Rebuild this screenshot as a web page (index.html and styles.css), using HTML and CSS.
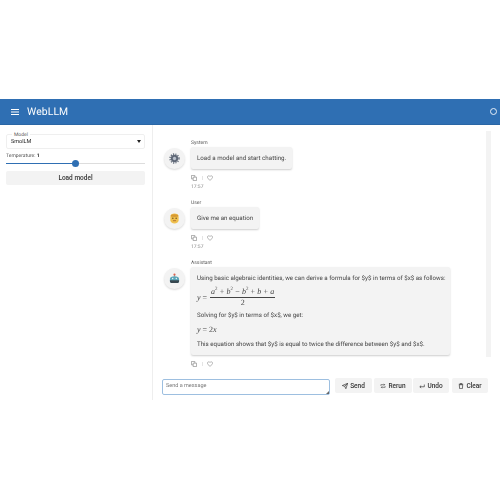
FILE: index.html

```html
<!DOCTYPE html>
<html lang="en">
<head>
  <meta charset="UTF-8" />
  <title>WebLLM</title>
  <link rel="stylesheet" href="styles.css">
</head>
<body>
  <div class="app">
    <header class="topbar">
      <svg class="menu-icon" width="10" height="10" viewBox="0 0 10 10"><path d="M1 2h8v1H1zM1 4.500h8v1H1zM1 7h8v1H1z" fill="#fff"/></svg>
      <h1>WebLLM</h1>
      <span class="spinner"></span>
    </header>
    <div class="main">
      <aside class="sidebar">
        <div class="select-box">
          <span class="select-label">Model</span>
          <span>SmolLM</span>
          <span class="select-arrow"></span>
        </div>
        <div class="temp-label">Temperature: <b>1</b></div>
        <div class="slider"><span class="slider-fill"></span><span class="slider-thumb"></span></div>
        <button class="load-btn">Load model</button>
      </aside>
      <section class="chat">
        <div class="messages">
          <div class="msg">
            <div class="avatar">
              <svg width="11" height="11" viewBox="0 0 12 12"><circle cx="6" cy="6" r="4" fill="#5f6877"/><circle cx="6" cy="6" r="4.900" fill="none" stroke="#5f6877" stroke-width="1.500" stroke-dasharray="1.300 1.300"/><circle cx="6" cy="6" r="1.800" fill="#b9c0cb"/></svg>
            </div>
            <div class="msg-body">
              <div class="msg-role">System</div>
              <div class="bubble">Load a model and start chatting.</div>
              <div class="msg-tools">
                <svg width="6" height="6" viewBox="0 0 7 7"><path d="M2.500 2.500h4v4h-4zM4.500 2.500V.5h-4v4h2" fill="none" stroke="#8a8a8a" stroke-width=".8"/></svg>
                <span class="tool-sep"></span>
                <svg width="6" height="6" viewBox="0 0 7 7"><path d="M3.500 6.200C1.500 4.700.5 3.700.5 2.500c0-1.700 2.200-2.100 3-.6.800-1.500 3-1.100 3 .6 0 1.200-1 2.200-3 3.700z" fill="none" stroke="#8a8a8a" stroke-width=".7"/></svg>
              </div>
              <div class="msg-time">17:57</div>
            </div>
          </div>
          <div class="msg">
            <div class="avatar">
              <svg width="11" height="11" viewBox="0 0 12 12"><path d="M1.500 4.500C1.500 1.500 3.500.6 6 .6s4.500.9 4.500 3.900v3.500c0 1.900-2 3.400-4.500 3.400S1.500 9.900 1.500 8z" fill="#f0c14e"/><path d="M2 3.800C4 4.400 8 4.400 10 3.800V2.200C8 1 4 1 2 2.200z" fill="#d89a32"/><circle cx="4.200" cy="5.800" r=".8" fill="#6a4a20"/><circle cx="7.800" cy="5.800" r=".8" fill="#6a4a20"/><path d="M4.300 8.400h3.400" stroke="#a8662a" stroke-width=".9"/></svg>
            </div>
            <div class="msg-body">
              <div class="msg-role">User</div>
              <div class="bubble">Give me an equation</div>
              <div class="msg-tools">
                <svg width="6" height="6" viewBox="0 0 7 7"><path d="M2.500 2.500h4v4h-4zM4.500 2.500V.5h-4v4h2" fill="none" stroke="#8a8a8a" stroke-width=".8"/></svg>
                <span class="tool-sep"></span>
                <svg width="6" height="6" viewBox="0 0 7 7"><path d="M3.500 6.200C1.500 4.700.5 3.700.5 2.500c0-1.700 2.200-2.100 3-.6.800-1.500 3-1.100 3 .6 0 1.200-1 2.200-3 3.700z" fill="none" stroke="#8a8a8a" stroke-width=".7"/></svg>
              </div>
              <div class="msg-time">17:57</div>
            </div>
          </div>
          <div class="msg">
            <div class="avatar">
              <svg width="11" height="11" viewBox="0 0 12 12"><path d="M1 6.500C1 4.500 3 3.500 6 3.500s5 1 5 3v2.500c0 1-1 2-2 2H3c-1 0-2-1-2-2z" fill="#5aa5b8"/><path d="M1 8h10v1c0 1-1 2-2 2H3c-1 0-2-1-2-2z" fill="#37474f"/><circle cx="6" cy="1.800" r="1.200" fill="#e0604c"/><path d="M5.500 2.500h1v1.200h-1z" fill="#888"/><circle cx="4" cy="6" r=".8" fill="#e8f2f5"/><circle cx="8" cy="6" r=".8" fill="#e8f2f5"/></svg>
            </div>
            <div class="msg-body">
              <div class="msg-role">Assistant</div>
              <div class="bubble bubble-wide">
                <p>Using basic algebraic identities, we can derive a formula for $y$ in terms of $x$ as follows:</p>
                <div class="math">
                  <span class="math-lhs"><i>y</i> =</span>
                  <span class="frac">
                    <span class="frac-top"><i>a</i><sup>2</sup> + <i>b</i><sup>2</sup> − <i>b</i><sup>2</sup> + <i>b</i> + <i>a</i></span>
                    <span>2</span>
                  </span>
                </div>
                <p>Solving for $y$ in terms of $x$, we get:</p>
                <div class="math-small"><i>y</i> = 2<i>x</i></div>
                <p>This equation shows that $y$ is equal to twice the difference between $y$ and $x$.</p>
              </div>
              <div class="msg-tools">
                <svg width="6" height="6" viewBox="0 0 7 7"><path d="M2.500 2.500h4v4h-4zM4.500 2.500V.5h-4v4h2" fill="none" stroke="#8a8a8a" stroke-width=".8"/></svg>
                <span class="tool-sep"></span>
                <svg width="6" height="6" viewBox="0 0 7 7"><path d="M3.500 6.200C1.500 4.700.5 3.700.5 2.500c0-1.700 2.200-2.100 3-.6.800-1.500 3-1.100 3 .6 0 1.200-1 2.200-3 3.700z" fill="none" stroke="#8a8a8a" stroke-width=".7"/></svg>
              </div>
            </div>
          </div>
          <div class="scrollbar"></div>
        </div>
        <div class="composer">
          <div class="msg-input">Send a message
            <svg class="resize-grip" width="3" height="3" viewBox="0 0 3 3"><path d="M3 0v3H0z" fill="#666"/></svg>
          </div>
          <button class="act-btn btn-send">
            <svg width="6" height="6" viewBox="0 0 7 7"><path d="M.3 3l6.400-2.700L4.500 6.700 3.200 3.800zM3.200 3.800L6.700.3" fill="none" stroke="#333" stroke-width=".8"/></svg>Send
          </button>
          <button class="act-btn btn-rerun">
            <svg width="6" height="6" viewBox="0 0 7 7"><path d="M1 3.200V2h4.500M4.500 1l1 1-1 1M6 3.800V5H1.500M2.500 6l-1-1 1-1" fill="none" stroke="#333" stroke-width=".7"/></svg>Rerun
          </button>
          <button class="act-btn btn-undo">
            <svg width="6" height="6" viewBox="0 0 7 7"><path d="M6.200 1.800v2.600H1M2.500 3l-1.500 1.400 1.500 1.400" fill="none" stroke="#333" stroke-width=".8"/></svg>Undo
          </button>
          <button class="act-btn btn-clear">
            <svg width="6" height="6" viewBox="0 0 7 7"><path d="M1.500 2h4l-.4 4.600H1.900zM1 1.400h5M2.700 1.400V.6h1.600v.8" fill="none" stroke="#333" stroke-width=".8"/></svg>Clear
          </button>
        </div>
      </section>
    </div>
  </div>
</body>
</html>
```

FILE: styles.css

```css
html, body {
  margin: 0;
  padding: 0;
  background: #fff;
}
body {
  font-family: Roboto, "Liberation Sans", sans-serif;
  color: #333;
  height: 500px;
  overflow: hidden;
  text-rendering: geometricPrecision;
}
.app {
  margin-top: 99px;
  height: 301px;
  display: flex;
  flex-direction: column;
  filter: blur(.3px);
}
.topbar {
  height: 26px;
  flex: none;
  display: flex;
  align-items: center;
  background: #2f6fb3;
  color: #fff;
  padding: 0 3px 0 10px;
  border-bottom: 1px solid #2a66a5;
  box-sizing: border-box;
}
.menu-icon {
  margin-right: 7px;
}
.topbar h1 {
  margin: 0;
  font-size: 10.400px;
  font-weight: 400;
  letter-spacing: .1px;
  flex: 1;
}
.spinner {
  width: 5px;
  height: 5px;
  flex: none;
  border: 1.500px solid #e6eef7;
  border-radius: 50%;
}
.main {
  flex: 1;
  display: flex;
  min-height: 0;
}
.sidebar {
  width: 153px;
  flex: none;
  box-sizing: border-box;
  padding: 9px 7px 0 6px;
  border-right: 1px solid #eee;
  font-size: 6px;
}
.select-box {
  position: relative;
  height: 15px;
  box-sizing: border-box;
  border: 1px solid #efefef;
  border-radius: 2px;
  padding: 3px 4px 0 4px;
  font-size: 5.500px;
  line-height: 8px;
  color: #222;
}
.select-label {
  position: absolute;
  top: -3px;
  left: 5px;
  padding: 0 2px;
  background: #fff;
  font-size: 5px;
  line-height: 6px;
  color: #666;
}
.select-arrow {
  position: absolute;
  right: 3px;
  top: 5px;
  border-left: 2px solid transparent;
  border-right: 2px solid transparent;
  border-top: 3px solid #222;
}
.temp-label {
  margin-top: 3px;
  font-size: 5px;
  line-height: 8px;
  color: #555;
}
.temp-label b {
  color: #222;
}
.slider {
  position: relative;
  height: 1px;
  margin-top: 3px;
  background: #ddd;
}
.slider-fill {
  position: absolute;
  left: 0;
  top: 0;
  height: 1px;
  width: 50%;
  background: #2f6fb3;
}
.slider-thumb {
  position: absolute;
  left: 66px;
  top: -3px;
  width: 7px;
  height: 7px;
  border-radius: 50%;
  background: #2f6fb3;
}
.load-btn {
  display: block;
  width: 100%;
  height: 14px;
  margin-top: 7px;
  padding: 0;
  border: 0;
  border-radius: 2px;
  background: #f3f3f3;
  font-family: inherit;
  font-size: 6.500px;
  font-weight: 500;
  color: #333;
}
.chat {
  flex: 1;
  min-width: 0;
  display: flex;
  flex-direction: column;
}
.messages {
  position: relative;
  height: 253px;
  flex: none;
  overflow: hidden;
  padding: 15px 0 0 11px;
  box-sizing: border-box;
}
.scrollbar {
  position: absolute;
  left: 333px;
  top: 6px;
  width: 5px;
  height: 226px;
  background: #f3f3f3;
}
.msg {
  display: flex;
  gap: 6px;
  margin-bottom: 9px;
}
.avatar {
  width: 21px;
  height: 21px;
  flex: none;
  margin-top: 8px;
  display: flex;
  align-items: center;
  justify-content: center;
  border-radius: 50%;
  background: #f3f3f3;
  box-shadow: 0 1px 2px rgba(0,0,0,0.15);
}
.msg-role {
  font-size: 5px;
  line-height: 7px;
  color: #555;
}
.bubble {
  width: fit-content;
  padding: 0 6px;
  height: 22px;
  line-height: 22px;
  background: #f3f3f3;
  border-radius: 2px;
  box-shadow: 0 1px 2px rgba(0,0,0,0.2);
  font-size: 6.200px;
  color: #444;
}
.bubble-wide {
  width: 247px;
  height: 82px;
  line-height: 10px;
  padding-top: 6px;
}
.bubble-wide p {
  margin: 0;
  white-space: nowrap;
}
.math {
  display: flex;
  align-items: center;
  gap: 3px;
  margin: 4px 0 2px;
  font-family: "Liberation Serif", serif;
  font-size: 8px;
}
.math-small {
  margin: 5px 0 4px;
  height: 10px;
  font-family: "Liberation Serif", serif;
  font-size: 8px;
}
.frac {
  display: inline-flex;
  flex-direction: column;
  align-items: center;
  line-height: 10px;
  word-spacing: .2px;
}
.frac-top {
  border-bottom: 1px solid #444;
  padding: 0 1px;
}
.frac sup {
  font-size: 5px;
  line-height: 0;
}
.msg-tools {
  display: flex;
  align-items: center;
  gap: 4.500px;
  height: 7px;
  margin-top: 5px;
}
.msg-tools svg {
  display: block;
}
.tool-sep {
  width: 1px;
  height: 4px;
  background: #e4e4e4;
}
.msg-time {
  margin-top: 2px;
  font-size: 5px;
  line-height: 8px;
  color: #888;
}
.composer {
  display: flex;
  align-items: flex-start;
  padding: 0 0 0 9px;
}
.msg-input {
  position: relative;
  width: 168px;
  height: 16px;
  margin-top: 1px;
  flex: none;
  box-sizing: border-box;
  border: 1px solid #9dbfe0;
  border-radius: 2px;
  padding: 0 3px;
  font-size: 5.500px;
  line-height: 13px;
  color: #777;
}
.resize-grip {
  position: absolute;
  right: 0;
  bottom: 0;
}
.act-btn {
  display: flex;
  align-items: center;
  justify-content: center;
  gap: 2px;
  height: 15px;
  padding: 0;
  border: 0;
  border-radius: 2px;
  background: #f3f3f3;
  font-family: inherit;
  font-size: 6.500px;
  font-weight: 500;
  color: #333;
}
.btn-send {
  width: 37px;
  margin-left: 5px;
}
.btn-rerun {
  width: 38px;
  margin-left: 2px;
}
.btn-undo {
  width: 36px;
  margin-left: 1px;
}
.btn-clear {
  width: 36px;
  margin-left: 3px;
}
```
